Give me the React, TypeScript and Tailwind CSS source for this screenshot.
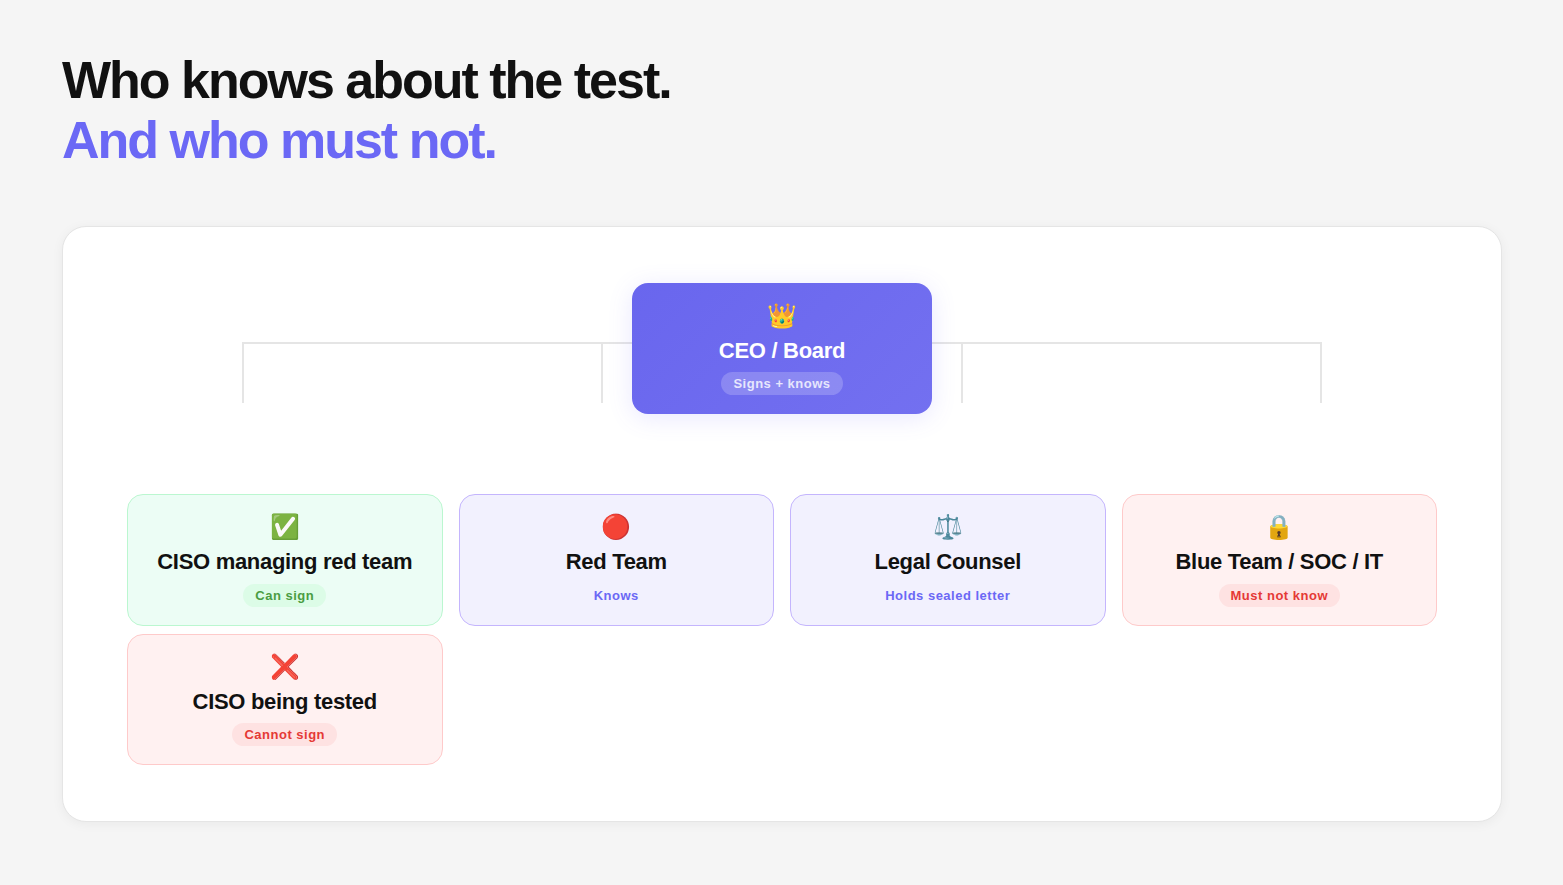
const people = [
  { icon: '✅', name: 'CISO managing red team', tag: 'Can sign', box: 'bg-[#ecfdf5] border-[#bbf7d0]', pill: 'bg-[#dcfce7] text-[#4a9d42]' },
  { icon: '🔴', name: 'Red Team', tag: 'Knows', box: 'bg-[#f2f1fe] border-[#c4b5fd]', pill: 'text-[#6b68f5]' },
  { icon: '⚖️', name: 'Legal Counsel', tag: 'Holds sealed letter', box: 'bg-[#f2f1fe] border-[#c4b5fd]', pill: 'text-[#6b68f5]' },
  { icon: '🔒', name: 'Blue Team / SOC / IT', tag: 'Must not know', box: 'bg-[#fff1f1] border-[#fecaca]', pill: 'bg-[#fee2e2] text-[#e53935]' },
  { icon: '❌', name: 'CISO being tested', tag: 'Cannot sign', box: 'bg-[#fff1f1] border-[#fecaca]', pill: 'bg-[#fee2e2] text-[#e53935]' },
]

export default function App() {
  return (
    <div className="min-h-[885px] bg-[#f5f5f5] px-[62px] pt-[50px] font-['Liberation_Sans',Arial,sans-serif]">
      <h1 className="text-[52px] leading-[60px] font-bold tracking-[-2px] text-[#111111]">
        Who knows about the test.
        <br />
        <span className="text-[#6b68f5]">And who must not.</span>
      </h1>

      <div className="mt-[56px] w-[1440px] rounded-3xl border border-[#e5e5e5] bg-white px-16 py-14 shadow-[0_2px_12px_rgba(0,0,0,0.05)]">
        <div className="relative flex justify-center">
          {/* connector lines sit behind the CEO card */}
          <div className="absolute top-[59px] left-[115px] grid h-[61px] w-[1080px] grid-cols-[1fr_1fr_1fr_2px] border-t-2 border-[#e5e5e5]">
            <div className="border-l-2 border-[#e5e5e5]" />
            <div className="border-l-2 border-[#e5e5e5]" />
            <div className="border-l-2 border-[#e5e5e5]" />
            <div className="border-l-2 border-[#e5e5e5]" />
          </div>
          <div className="relative flex h-[131px] w-[300px] flex-col items-center rounded-2xl bg-[linear-gradient(135deg,#6966ee,#7370f0)] pt-[15px] text-white shadow-[0_4px_24px_rgba(108,99,255,0.15)]">
            <div className="text-[24px] leading-[36px]">👑</div>
            <div className="mt-[2px] text-[22px] leading-[30px] font-bold tracking-[-0.3px]">CEO / Board</div>
            <div className="mt-[6px] rounded-full bg-white/20 px-3 py-[3px] text-[13px] leading-[17px] font-bold tracking-[0.5px] text-[#e6e6fd]">
              Signs + knows
            </div>
          </div>
        </div>

        <div className="mt-20 grid grid-cols-4 gap-x-4 gap-y-2">
          {people.map((p) => (
            <div key={p.name} className={`group flex h-[132px] flex-col items-center rounded-2xl border pt-[14px] last:h-[131px] ${p.box}`}>
              <div className="text-[24px] leading-[36px]">{p.icon}</div>
              <div className="mt-[2px] text-[22px] leading-[30px] font-bold tracking-[-0.3px] text-[#111111]">{p.name}</div>
              <div className={`mt-[7px] rounded-full px-3 py-[3px] text-[13px] leading-[17px] font-bold tracking-[0.5px] group-last:mt-[6px] ${p.pill}`}>
                {p.tag}
              </div>
            </div>
          ))}
        </div>
      </div>
    </div>
  )
}
